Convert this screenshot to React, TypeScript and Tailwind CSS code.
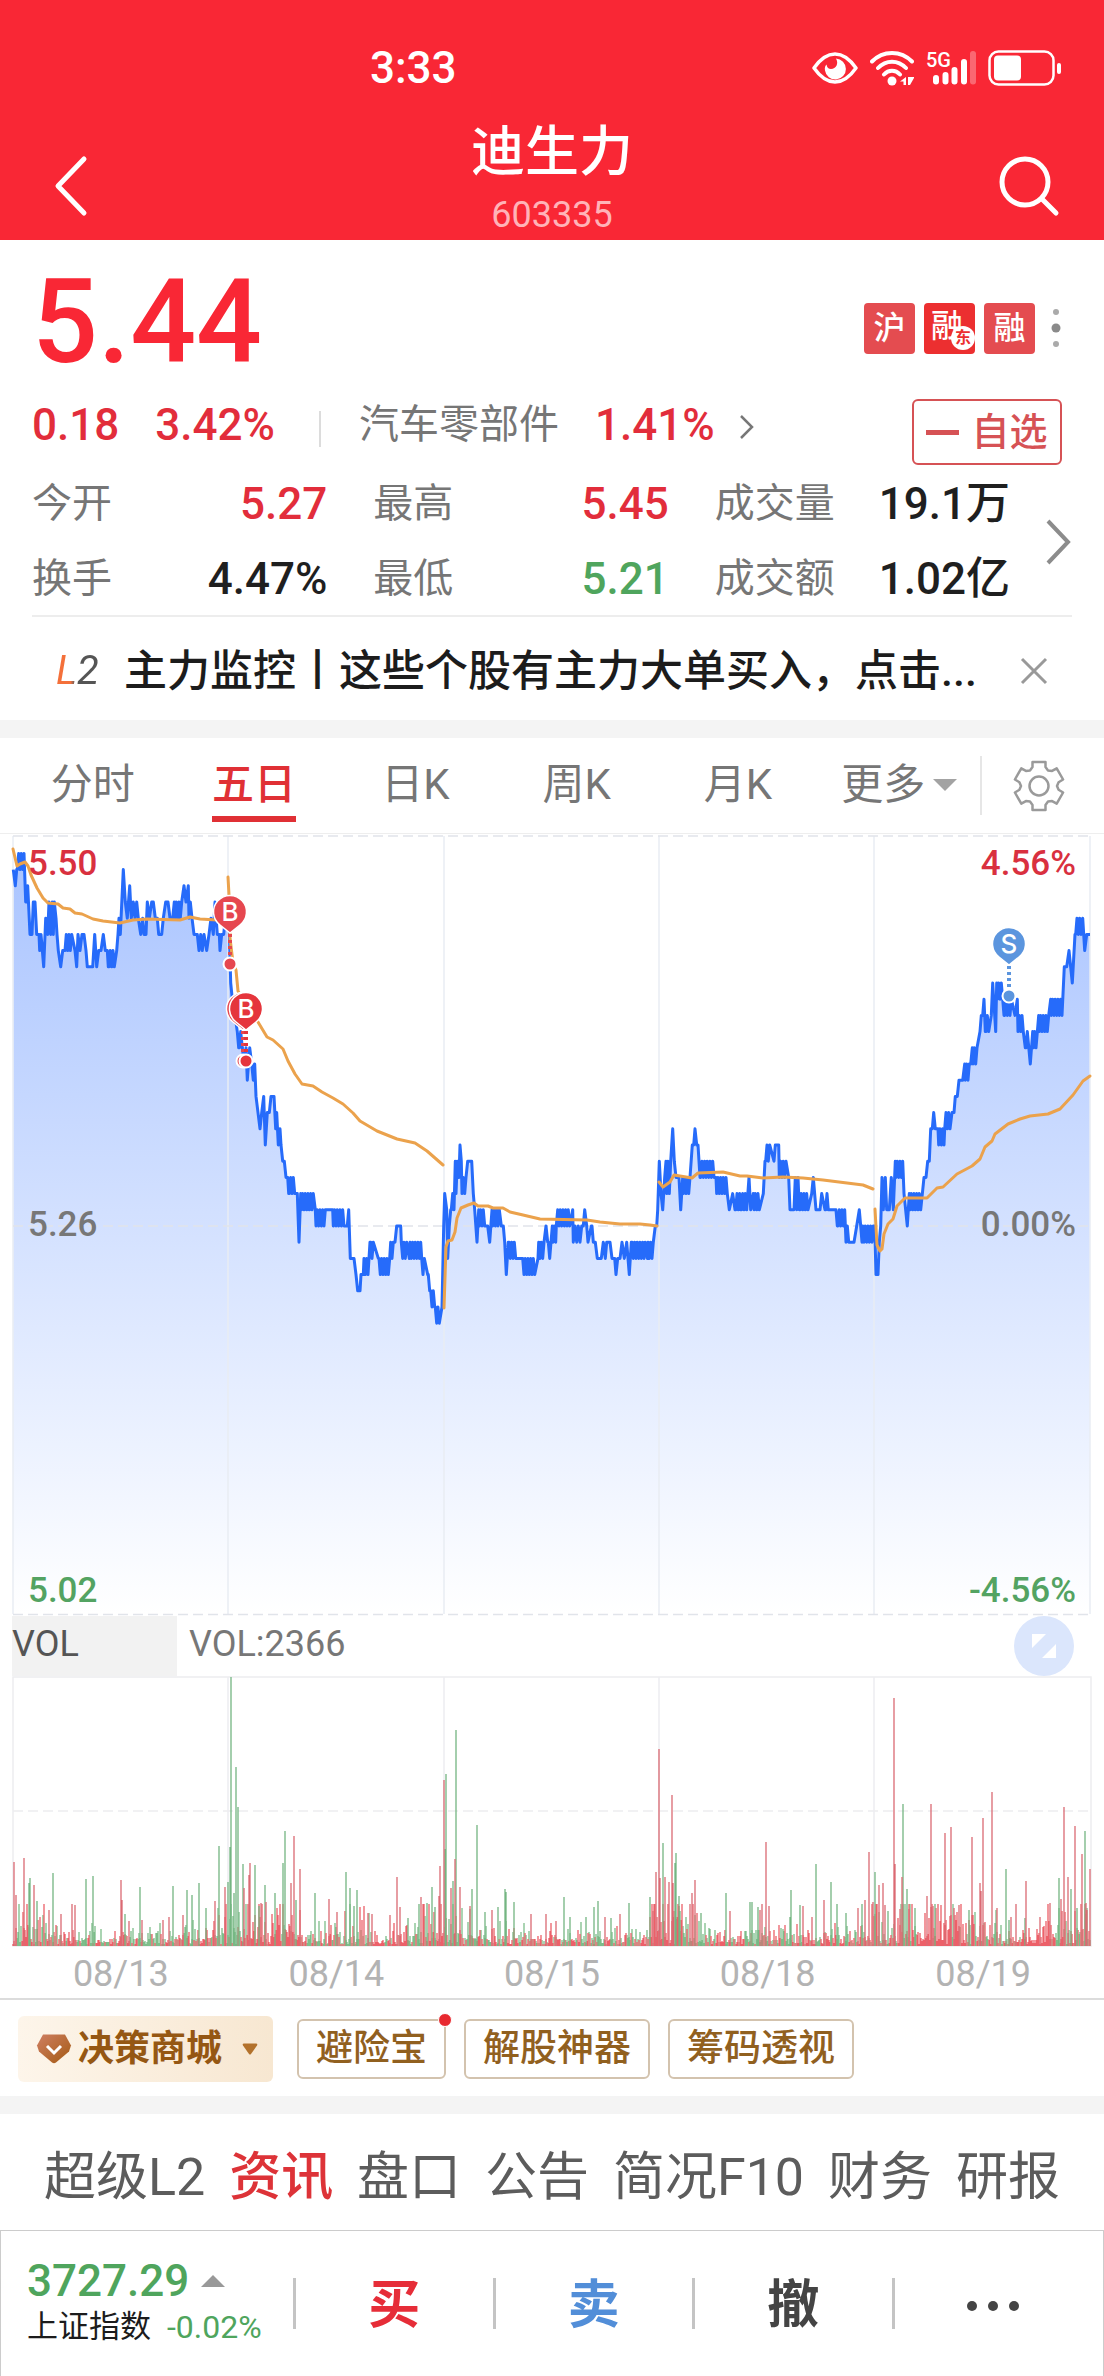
import { useState } from "react";

type Point = [number, number];

// price trace of the five days: "x:cents" is a point, "x:a/b" a run that flickers between a and b
// x counts thirds of a pixel from the part's origin, cents are relative to 5.26
const priceParts = [
  {
    origin: 0,
    trace:
      "40:22 46:21 50:22 75:22/23 77:20 86:20/21 90:18 96:18 100:20 105:20 110:18 117:18 125:17/18 131:16 137:19 143:18 147:20 152:18 157:20 160:18 163:20 168:19 171:18 175:17 182:16 188:17 193:17 218:17/18 225:17 230:16 234:18 240:17 246:18 252:18 258:17 262:16 278:16 284:18 290:16 296:17 303:17 310:18 316:17 322:17 325:16 345:16/17 350:17 354:18 357:19 361:18 370:22 376:20 382:19 389:21 394:19 400:20 405:19 410:20 415:19 422:18 428:19 432:18 438:18 442:20 448:19 455:20 460:20 466:19 472:19 476:18 485:18 490:19 497:20 504:20 510:19 518:19 523:20 545:19/20 552:21 558:20 565:21 571:19/20 576:19 582:18 592:18 597:17 602:18 607:17 612:18 620:17 627:18 633:19 640:18 645:20 652:18 658:18 660:17 665:18 671:18 676:19 685:20 687:19 692:15 697:14 705:13 712:12 716:11 722:11/12 727:11 733:10 738:11 742:9 749:11 755:10 760:9 764:10 768:8 774:7 780:6 785:7 791:8 796:5 802:7 808:7 813:8 822:8 827:6 830:7 835:5 840:6 843:5 848:4 853:4 858:3 863:3 866:2 886:2/3 892:2 897:-1 902:2 942:1/2 946:1 978:0/1 985:1 998:1 1035:0/1 1042:0 1046:1 1051:-2 1062:-2 1068:-3 1073:-4 1078:-4",
  },
  {
    origin: 1080,
    trace:
      "0:-4 3:-3 10:-3 25:-2/-3 30:-1 40:-1/-2 55:-2 90:-2/-3 103:-1/-2 105:-1 110:0 122:0 142:-1/-2 148:-2 183:-1/-2 195:-2/-3 203:-3 210:-3/-4 224:-4/-5 240:-5/-6 246:-5 251:0 254:2 260:1 263:-2 268:0 272:1 283:1/2 286:4 292:2/4 297:3 300:5 304:4 318:2/3 323:4 335:4 340:2 344:1 351:-1 356:1 376:0/1 383:0 389:-1 396:1 420:0/1 424:0 430:0 434:-1 439:-3 445:-1 467:-1/-2 486:-2 526:-2/-3 534:-2 555:-1/-2 558:0 563:-1 572:-1/-2 577:0 587:-1/0 632:0/1 638:1 640:-1 645:0 650:-1 655:0 660:-1 665:0 670:0 674:1 680:0 684:-1 694:0 702:0/-1 706:-1 712:-2 724:-2 730:-1 736:-2 740:-1 750:-1 756:-2 764:-2 768:-3 773:-2 780:-2 786:-1 793:-2 800:-1 808:-3 814:-1 856:-1/-2 862:-2 881:-1/-2 886:0 890:0 893:1 898:4 903:2 908:1 914:3 918:4 933:2/4 938:6 943:4 948:3 957:3 962:1 968:3 992:2/3 997:5 1001:5 1005:6 1010:5 1014:5 1020:3 1064:3/4 1068:3 1105:2/3 1108:1 1118:2 1125:1 1140:1/2",
  },
  {
    origin: 2190,
    trace:
      "32:1 50:1/2 57:3 62:1 70:2 90:1/2 100:2 105:4 122:4/5 132:4 136:5 146:5 168:3/4 176:3 180:1 190:1 205:1/3 208:1 236:1/2 245:2 250:3 258:1 270:1 275:2 285:1 298:1/2 305:1 318:1 322:0 345:0/1 348:-1 352:0 356:-1 372:-1 380:0 388:1 392:0 396:-1 430:0/-1 434:0 438:-3 444:-3 448:-1 452:0 456:3 460:1 466:3 470:1 478:1 484:3 490:1 496:4 518:3/4 522:2 532:0 538:2 575:1/2 582:3 588:3 593:4 598:4 602:6 607:6 611:7 616:6 624:6 642:5/6 660:6/7 666:7 672:7 676:8 682:8 687:9 698:9 704:10 718:9/10 722:10 727:11 743:10/11 750:12 754:13 758:13 762:14 766:12 778:12/13 784:13 788:15 797:12 800:15 818:14/15 822:13 845:13/14 855:13 862:14 880:12/13 886:11 895:11/12 901:10 908:12 920:11/12 926:13 958:12/13 962:14 998:13/14 1003:16 1010:16 1017:17 1027:15 1035:18 1056:18/19 1058:19 1064:17 1070:18 1080:18",
  },
];

const averages: Point[][] = [
  [[13, 15], [17, 32], [20, 30], [25, 28], [28, 32], [31, 41], [37, 54], [43, 64], [48, 69], [58, 70], [63, 74], [70, 75], [75, 79], [82, 80], [93, 85], [103, 87], [120, 89], [133, 86], [147, 85], [180, 86], [190, 83], [200, 85], [217, 86], [227, 84]],
  [[228, 43], [229, 61], [230, 104], [233, 129], [236, 136], [238, 157], [247, 172], [258, 188], [267, 203], [273, 206], [283, 215], [288, 227], [295, 240], [302, 250], [313, 252], [322, 258], [333, 264], [343, 270], [353, 279], [360, 287], [377, 297], [397, 305], [415, 309], [427, 317], [435, 324], [443, 331]],
  [[444, 474], [446, 413], [448, 407], [452, 406], [455, 398], [457, 384], [461, 374], [468, 371], [474, 369], [478, 372], [488, 372], [493, 374], [503, 374], [510, 378], [523, 381], [540, 385], [587, 386], [600, 388], [620, 390], [640, 390], [650, 391], [657, 392]],
  [[659, 348], [663, 353], [670, 348], [674, 341], [692, 344], [698, 339], [723, 338], [740, 342], [747, 342], [763, 344], [783, 343], [803, 344], [823, 346], [847, 349], [863, 351], [873, 355]],
  [[875, 375], [877, 411], [880, 417], [882, 415], [884, 400], [888, 390], [893, 385], [897, 372], [905, 364], [927, 364], [937, 354], [943, 353], [957, 340], [972, 332], [980, 325], [985, 313], [992, 307], [995, 300], [1008, 290], [1020, 285], [1030, 282], [1048, 280], [1060, 275], [1073, 261], [1083, 247], [1090, 242]],
];

// tall volume bars, "x,height"
const upBars =
  "14,84 16,51 24,88 34,61 49,36 61,32 72,42 75,41 121,66 122,46 129,25 142,26 163,26 169,29 183,31 215,45 225,59 244,58 249,71 250,83 261,43 266,44 291,63 294,110 300,77 329,47 337,34 368,33 372,32 390,31 397,69 400,39 421,49 439,50 440,80 444,166 451,58 455,87 460,59 470,40 492,36 531,32 546,32 556,25 605,29 620,32 653,35 656,74 659,197 660,68 665,69 669,64 672,151 673,63 690,42 692,53 695,66 730,35 760,36 762,42 766,104 769,40 803,40 812,29 824,46 858,38 865,46 869,94 873,44 879,61 883,63 885,41 894,248 895,82 900,37 902,69 909,37 927,50 931,142 933,40 945,113 951,119 954,38 959,41 972,109 980,63 981,55 983,128 992,154 997,38 1011,29 1016,42 1026,65 1040,29 1050,43 1061,47 1064,139 1068,69 1075,120 1082,92 1086,43 1087,36 1090,77";
const downBars =
  "30,68 29,63 37,45 53,73 86,67 93,70 125,32 140,59 173,60 187,56 192,51 199,63 206,38 219,100 228,64 230,99 231,269 234,53 236,179 238,139 243,82 255,81 259,40 265,61 275,53 283,83 285,115 296,46 315,53 346,74 350,58 354,40 357,56 408,28 419,42 427,43 432,59 435,39 446,172 445,97 453,65 456,216 472,57 477,121 485,34 498,39 505,57 506,54 514,44 564,49 570,29 586,29 594,39 598,45 611,28 629,43 650,49 663,103 675,83 676,93 679,50 680,35 701,33 726,53 750,44 752,44 758,39 790,29 791,56 800,41 816,82 831,64 837,42 846,33 862,42 875,74 888,35 903,142 907,57 915,38 935,42 969,36 1006,77 1009,26 1025,28 1059,68 1071,57 1077,38 1085,115";

// stretches with heavier trading: [from, to, height]
const busy: number[][] = [
  [13, 45, 24], [120, 126, 18], [216, 300, 28], [345, 372, 18], [415, 470, 28],
  [650, 700, 26], [870, 912, 26], [925, 1000, 24], [1048, 1091, 28],
];

const priceY = (cents: number) => 392 - cents * 16.2;

function buildPrice(): Point[] {
  const out: Point[] = [];
  for (const part of priceParts) {
    let last = 0;
    for (const item of part.trace.split(" ")) {
      const [x, value] = item.split(":");
      const end = Number(x);
      const levels = value.split("/").map(Number);
      if (levels.length === 1) {
        out.push([(part.origin + end) / 3, priceY(levels[0])]);
      } else {
        let i = 0;
        for (let at = last + 2; at <= end; at += 4) {
          out.push([(part.origin + at) / 3, priceY(levels[i % 2])]);
          i += 1;
        }
      }
      last = end;
    }
  }
  return out;
}

const toLine = (pts: Point[]) => pts.map(([x, y]) => `${x.toFixed(1)},${y.toFixed(1)}`).join(" ");

const toBars = (bars: string) =>
  bars
    .split(" ")
    .map((b) => {
      const [x, h] = b.split(",");
      return `M${x} 270v-${h}`;
    })
    .join("");

function buildSmallBars() {
  let seed = 77;
  const rand = () => {
    seed = (seed * 16807) % 2147483647;
    return seed / 2147483647;
  };
  let up = "";
  let down = "";
  let bias = 0.5;
  for (let x = 13; x <= 1090; x++) {
    if (x % 22 === 0) bias = 0.3 + rand() * 0.5 + (x > 900 ? 0.2 : 0);
    const zone = busy.find(([a, b]) => x >= a && x <= b);
    const size = zone ? zone[2] : 10;
    const h = Math.min(2 + -Math.log(1 - rand() * 0.97) * size * 0.7, 42).toFixed(0);
    if (rand() < bias) up += `M${x} 270v-${h}`;
    else down += `M${x} 270v-${h}`;
  }
  return { up, down };
}

const price = buildPrice();
const smallBars = buildSmallBars();
const dayLines = [228, 444, 659, 874];

function gearPath() {
  const pts: string[] = [];
  for (let i = 0; i < 6; i++) {
    const base = i * 60 - 90;
    for (const [a, r] of [[-15, 25], [15, 25], [19, 20], [30, 18], [41, 20]]) {
      const t = ((base + a) * Math.PI) / 180;
      pts.push(`${(27 + r * Math.cos(t)).toFixed(1)} ${(27 + r * Math.sin(t)).toFixed(1)}`);
    }
  }
  return `M${pts.join("L")}Z`;
}

function StatusIcons() {
  return (
    <div className="flex items-center gap-3 text-white">
      {/* eye comfort */}
      <svg className="w-[46px] h-8" viewBox="0 0 46 32" fill="none">
        <path d="M2 16C9 6 16 2 23 2s14 4 21 14C37 26 30 30 23 30S9 26 2 16Z" stroke="#fff" strokeWidth="3.500" strokeLinejoin="round" />
        <path d="M24 6.500a10.500 10.500 0 1 1-11 12c-.6-3 .4-5 1.500-6 .5 3 2 4.500 4.500 4.500 5 0 8-5.500 5-10.500Z" fill="#fff" />
      </svg>
      {/* wifi */}
      <svg className="w-11 h-9" viewBox="0 0 44 36" fill="none" stroke="#fff" strokeWidth="4" strokeLinecap="round">
        <path d="M2 11.500c11-11.500 29-11.500 40 0M8 18c8-8.500 20-8.500 28 0M14 24.500c4.500-5 11.500-5 16 0" />
        <circle cx="22" cy="31" r="4.500" fill="#fff" stroke="none" />
        <path d="m36 27-6 4.500h3.500V35H36Zm2 8v-8h6.500L40 35Z" fill="#fff" stroke="none" />
      </svg>
      {/* signal */}
      <svg className="w-[50px] h-9 overflow-visible" viewBox="0 0 50 36" stroke="#fff" strokeWidth="6" strokeLinecap="round">
        <text x="0" y="17" fontSize="20" fontWeight="500" fill="#fff" stroke="none">5G</text>
        <path d="M10 28v3.500M19.500 25v6.500M28.500 20v11.500M38 12v19.500" />
        <path d="M47 4v27.500" opacity=".3" />
      </svg>
      <svg className="w-[74px] h-9" viewBox="0 0 74 36">
        <rect x="1.500" y="1.500" width="64" height="33" rx="9" fill="none" stroke="#fff" strokeWidth="2.500" />
        <rect x="6" y="5.500" width="27" height="25" rx="4" fill="#fff" />
        <rect x="69" y="13" width="4" height="11" rx="2" fill="#fff" />
      </svg>
    </div>
  );
}

function Header() {
  return (
    <header className="bg-[#f92735] text-white pt-11">
      <div className="flex h-12 items-center justify-between pl-[370px] pr-[42px]">
        <span className="text-[44px] leading-12 font-medium">3:33</span>
        <StatusIcons />
      </div>
      <div className="flex h-[148px] items-center justify-between px-[42px]">
        <button aria-label="返回" className="pt-10">
          <svg className="w-16 h-16" viewBox="0 0 64 64" fill="none" stroke="#fff" strokeWidth="5" strokeLinecap="round" strokeLinejoin="round">
            <path d="M42 5 16 32l26 27" />
          </svg>
        </button>
        <div className="text-center pt-6">
          <h1 className="text-[54px] leading-16 font-medium">迪生力</h1>
          <p className="text-4xl leading-10 mt-[10px] text-[#ffb3b8]">603335</p>
        </div>
        <button aria-label="搜索" className="pt-10">
          <svg className="w-16 h-16" viewBox="0 0 64 64" fill="none" stroke="#fff" strokeWidth="5" strokeLinecap="round">
            <circle cx="27" cy="28" r="23" />
            <path d="m44 45 14 14" />
          </svg>
        </button>
      </div>
    </header>
  );
}

function Badge({ text }: { text: string }) {
  return (
    <span className="size-[51px] rounded bg-[#e44c50] text-center text-[32px] leading-[51px] font-medium text-white">{text}</span>
  );
}

const stats = [
  { label: "今开", value: "5.27", color: "text-[#e22d3b]" },
  { label: "最高", value: "5.45", color: "text-[#e22d3b]" },
  { label: "成交量", value: "19.1万", color: "text-[#1f1f1f]" },
  { label: "换手", value: "4.47%", color: "text-[#1f1f1f]" },
  { label: "最低", value: "5.21", color: "text-[#4fa55d]" },
  { label: "成交额", value: "1.02亿", color: "text-[#1f1f1f]" },
];

function Quote() {
  return (
    <section className="pt-7 px-8">
      <div className="flex h-[108px] items-center justify-between">
        <p className="text-[116px] leading-[108px] font-medium text-[#f92735]">5.44</p>
        <div className="flex items-center gap-[9px] pt-3 -mr-2">
          <Badge text="沪" />
          <span className="relative size-[51px] rounded bg-[#ec2f30] pl-[7px] text-[32px] leading-[46px] font-medium text-white">
            融
            <span className="absolute right-0 bottom-1 size-6 rounded-full bg-white text-center text-base leading-6 text-[#ec2f30] font-bold">东</span>
          </span>
          <Badge text="融" />
          <svg className="w-9 h-12" viewBox="0 0 36 48">
            <circle cx="12" cy="8" r="3" fill="#aaa" />
            <circle cx="12" cy="24" r="4.500" fill="#8a8a8a" />
            <circle cx="12" cy="40" r="3" fill="#aaa" />
          </svg>
        </div>
      </div>

      <div className="mt-[23px] flex items-start text-[44px] leading-[52px] font-medium text-[#e22d3b]">
        <span>0.18</span>
        <span className="ml-9">3.42%</span>
        <span className="mt-3 ml-11 h-9 w-[2px] bg-[#dcdcdc]" />
        <a href="#sector" className="ml-[38px] flex items-center">
          <span className="text-[40px] font-normal text-[#767676]">汽车零部件</span>
          <span className="ml-9">1.41%</span>
          <svg className="ml-6 mt-1 w-4 h-7" viewBox="0 0 16 28" fill="none" stroke="#777" strokeWidth="2.500">
            <path d="m2 3 11 11L2 25" />
          </svg>
        </a>
        <button className="ml-auto mr-[10px] flex h-[66px] w-[150px] items-center justify-center gap-3 rounded-md border-2 border-[#d65255] text-[38px] font-medium text-[#d65255]">
          <span className="h-[5px] w-[33px] bg-[#d65255]" />
          自选
        </button>
      </div>

      <div className="mt-[13px] flex items-center">
        <dl className="grid flex-1 grid-cols-3 gap-x-[46px] gap-y-[23px] leading-[52px]">
          {stats.map((s) => (
            <div key={s.label} className="flex justify-between whitespace-nowrap">
              <dt className="text-[40px] text-[#767676]">{s.label}</dt>
              <dd className={`text-[44px] font-medium ${s.color}`}>{s.value}</dd>
            </div>
          ))}
        </dl>
        <button aria-label="更多行情" className="ml-[34px] -mr-1">
          <svg className="w-8 h-12" viewBox="0 0 32 48" fill="none" stroke="#8c8c8c" strokeWidth="4">
            <path d="m4 3 20 21L4 45" />
          </svg>
        </button>
      </div>
      <div className="mt-[10px] h-[2px] bg-[#ededed]" />
    </section>
  );
}

function Notice() {
  return (
    <section className="flex h-[103px] items-center px-14 pt-1">
      <span className="w-12 bg-linear-to-r from-[#f4703a] from-30% to-[#555] to-40% bg-clip-text text-[40px] leading-12 text-transparent italic">L2</span>
      <p className="ml-5 flex-1 whitespace-nowrap text-[43px] leading-14 font-medium text-[#1c1c1c]">
        主力监控丨这些个股有主力大单买入，点击...
      </p>
      <button aria-label="关闭">
        <svg className="w-7 h-7" viewBox="0 0 28 28" stroke="#999" strokeWidth="3">
          <path d="m2 2 24 24M26 2 2 26" />
        </svg>
      </button>
    </section>
  );
}

const periods = ["分时", "五日", "日K", "周K", "月K", "更多"];

function PeriodTabs() {
  const [active, setActive] = useState("五日");
  return (
    <nav className="flex h-24 border-b border-[#eee] pl-3">
      <div className="grid flex-1 grid-cols-6">
        {periods.map((p) => (
          <button key={p} onClick={() => setActive(p)} className="flex flex-col items-center pt-[17px]">
            <span className={`flex items-center gap-2 text-[42px] leading-[60px] ${p === active ? "font-medium text-[#e03035]" : "text-[#767676]"}`}>
              {p}
              {p === "更多" && (
                <svg className="w-6 h-3" viewBox="0 0 24 12" fill="#a3a3a3">
                  <path d="M0 0h24L12 12Z" />
                </svg>
              )}
            </span>
            {p === active && <span className="mt-px h-[6px] w-[84px] bg-[#e03035]" />}
          </button>
        ))}
      </div>
      <button aria-label="图表设置" className="my-[18px] flex w-[124px] items-center justify-center border-l-2 border-[#e6e6e6] pr-2">
        <svg className="size-[54px]" viewBox="0 0 54 54" fill="none" stroke="#9a9a9a" strokeWidth="2.500" strokeLinejoin="round">
          <path d={gearPath()} />
          <circle cx="27" cy="27" r="9.500" />
        </svg>
      </button>
    </nav>
  );
}

function Marker({ x, y, letter, color }: { x: number; y: number; letter: string; color: string }) {
  return (
    <g>
      <path d={`M${x} ${y + 22}V${y + 48}`} stroke={color} strokeWidth="4" strokeDasharray="3 3" />
      <circle cx={x} cy={y + 52} r="6.500" fill={color} stroke="#fff" strokeWidth="2" />
      <path d={`M${x - 10} ${y + 13}L${x} ${y + 21}L${x + 10} ${y + 13}A16.500 16.500 0 1 0 ${x - 10} ${y + 13}Z`} fill={color} stroke="#fff" strokeWidth="1.500" />
      <text className="font-['Inter',sans-serif]" x={x} y={y + 9} textAnchor="middle" fontSize="26" fontWeight="500" fill="#fff">{letter}</text>
    </g>
  );
}

function PriceChart() {
  return (
    <svg className="block w-full" viewBox="0 0 1104 782">
      <defs>
        <linearGradient id="area" gradientUnits="userSpaceOnUse" x1="0" y1="2" x2="0" y2="780">
          <stop offset="0" stopColor="#a8c3ff" />
          <stop offset="1" stopColor="#ffffff" />
        </linearGradient>
      </defs>
      <polygon points={`13,780 ${toLine(price)} 1090,780`} fill="url(#area)" />
      <g stroke="#e9edf3" strokeWidth="1.500" fill="none">
        <path d="M13 2V780M1090 2V780" />
        {dayLines.map((x) => (
          <path key={x} d={`M${x} 2V780`} />
        ))}
        <path d="M13 2H1090M13 392H1090M13 780.500H1090" strokeDasharray="10 5" stroke="#e1e4ea" />
      </g>
      <polyline points={toLine(price)} fill="none" stroke="#266bfa" strokeWidth="3" strokeLinejoin="round" />
      {averages.map((day, i) => (
        <polyline key={i} points={toLine(day)} fill="none" stroke="#eba24c" strokeWidth="3" strokeLinejoin="round" strokeLinecap="round" />
      ))}
      <Marker x={230} y={78} letter="B" color="#e6474f" />
      <Marker x={243} y={175} letter="" color="#e6474f" />
      <Marker x={246} y={175} letter="B" color="#e5353c" />
      <Marker x={1009} y={110} letter="S" color="#5b95de" />
      <g fontSize="35" fontWeight="500">
        <text x="28" y="41" fill="#d9303f">5.50</text>
        <text x="28" y="402" fill="#777">5.26</text>
        <text x="28" y="768" fill="#53a362">5.02</text>
        <g textAnchor="end">
          <text x="1076" y="41" fill="#d9303f">4.56%</text>
          <text x="1076" y="402" fill="#777">0.00%</text>
          <text x="1076" y="768" fill="#53a362">-4.56%</text>
        </g>
      </g>
    </svg>
  );
}

const days = ["08/13", "08/14", "08/15", "08/18", "08/19"];

function Volume() {
  return (
    <section>
      <div className="flex h-[60px] items-center pl-3 pr-[30px] text-4xl leading-[54px]">
        <button className="h-[60px] w-[165px] bg-[#f2f2f2] pb-1 text-left text-[#555]">VOL</button>
        <span className="ml-3 pb-1 text-[#777]">VOL:2366</span>
        <button aria-label="全屏" className="ml-auto flex size-[60px] items-center justify-center rounded-full bg-[#dbe6fc]">
          <svg className="size-6" viewBox="0 0 24 24" fill="#fff">
            <path d="M0 0h14L0 14ZM24 24H10L24 10Z" />
          </svg>
        </button>
      </div>
      <svg className="block w-full" viewBox="0 0 1104 274">
        <g stroke="#ededf0" strokeWidth="1.500" fill="none">
          <path d="M13 1H1091V270H13Z" />
          {dayLines.map((x) => (
            <path key={x} d={`M${x} 1V270`} />
          ))}
          <path d="M13 135H1090" strokeDasharray="10 5" />
        </g>
        <g strokeWidth="1.300" fill="none">
          <path d={smallBars.down} stroke="#7dbd8a" />
          <path d={smallBars.up} stroke="#ec6069" />
          <path d={toBars(downBars)} stroke="#74b582" />
          <path d={toBars(upBars)} stroke="#db6a73" />
        </g>
      </svg>
      <div className="grid h-[50px] grid-cols-5 border-b-2 border-[#dcdcdc] px-[13px] text-center text-4xl leading-12 text-[#b3b3b3]">
        {days.map((d) => (
          <span key={d}>{d}</span>
        ))}
      </div>
    </section>
  );
}

function Tools() {
  const chip = "relative h-[60px] rounded-md border-2 border-[#d3c3ae] px-[17px] text-[37px] leading-[54px] font-medium text-[#91601f]";
  return (
    <section className="flex h-24 items-center gap-[18px] px-[18px] pt-px">
      <button className="mr-[6px] flex h-[66px] w-[255px] items-center rounded-md bg-linear-to-r from-[#fdf5ea] to-[#f7e7d1] pl-[18px] text-4xl font-bold text-[#955713]">
        <svg className="w-9 h-8" viewBox="0 0 36 32">
          <defs>
            <linearGradient id="gem" x1="0" y1="0" x2="1" y2="1">
              <stop offset="0" stopColor="#cf7f63" />
              <stop offset="1" stopColor="#a45a12" />
            </linearGradient>
          </defs>
          <path d="M7 1.500h22l6 11-2 6-13 11q-2 1.500-4 0L3 18.500l-2-6Z" fill="url(#gem)" />
          <path d="m11 13 7 7 7-7" fill="none" stroke="#fff" strokeWidth="3" />
        </svg>
        <span className="ml-[6px]">决策商城</span>
        <svg className="ml-5 w-4 h-3" viewBox="0 0 16 12">
          <path d="M2 .5h12q2 0 1 2L9 11q-1 1-2 0L1 2.500q-1-2 1-2Z" fill="#b3722c" />
        </svg>
      </button>
      <button className={chip}>
        避险宝
        <span className="absolute -top-2 -right-2 size-[14px] rounded-full border border-white bg-[#e8292f]" />
      </button>
      <button className={chip}>解股神器</button>
      <button className={chip}>筹码透视</button>
    </section>
  );
}

const sections = ["超级L2", "资讯", "盘口", "公告", "简况F10", "财务", "研报"];

function SectionTabs() {
  return (
    <nav className="flex h-[116px] items-center justify-between px-11 pt-3 text-[52px] leading-16">
      {sections.map((s) => (
        <a key={s} href={`#${s}`} className={s === "资讯" ? "font-medium text-[#dd3338]" : "text-[#5c5c5c]"}>
          {s}
        </a>
      ))}
    </nav>
  );
}

function TradeBar() {
  const cell = "flex h-[145px] flex-1 items-center justify-center pt-1 text-[52px] font-bold";
  const bar = "h-[51px] w-[3px] bg-[#c4c4c4]";
  return (
    <footer className="flex items-center border border-b-0 border-[#ccc] pr-3">
      <div className="w-[292px] pl-[26px]">
        <p className="flex items-center gap-3 text-[44px] leading-[46px] font-medium text-[#4fa55d]">
          3727.29
          <svg className="w-6 h-3" viewBox="0 0 24 12" fill="#999">
            <path d="M0 12h24L12 0Z" />
          </svg>
        </p>
        <p className="flex items-center gap-4 text-[31px] leading-[46px] whitespace-nowrap text-[#1c1c1c]">
          上证指数 <span className="text-[32px] text-[#4fa55d]">-0.02%</span>
        </p>
      </div>
      <span className={bar} />
      <button className={`${cell} text-[#e62d38]`}>买</button>
      <span className={bar} />
      <button className={`${cell} text-[#528ed8]`}>卖</button>
      <span className={bar} />
      <button className={`${cell} text-[#444]`}>撤</button>
      <span className={bar} />
      <button aria-label="更多" className={cell}>
        <svg className="w-[54px] h-3" viewBox="0 0 54 12" fill="#444">
          <circle cx="6" cy="6" r="5" />
          <circle cx="27" cy="6" r="5" />
          <circle cx="48" cy="6" r="5" />
        </svg>
      </button>
    </footer>
  );
}

export default function App() {
  return (
    <div className="bg-white font-['Roboto','Noto_Sans_CJK_SC',sans-serif]">
      <Header />
      <Quote />
      <Notice />
      <div className="h-[18px] bg-[#f4f4f4]" />
      <PeriodTabs />
      <PriceChart />
      <Volume />
      <Tools />
      <div className="h-[18px] bg-[#f4f4f4]" />
      <SectionTabs />
      <TradeBar />
    </div>
  );
}
